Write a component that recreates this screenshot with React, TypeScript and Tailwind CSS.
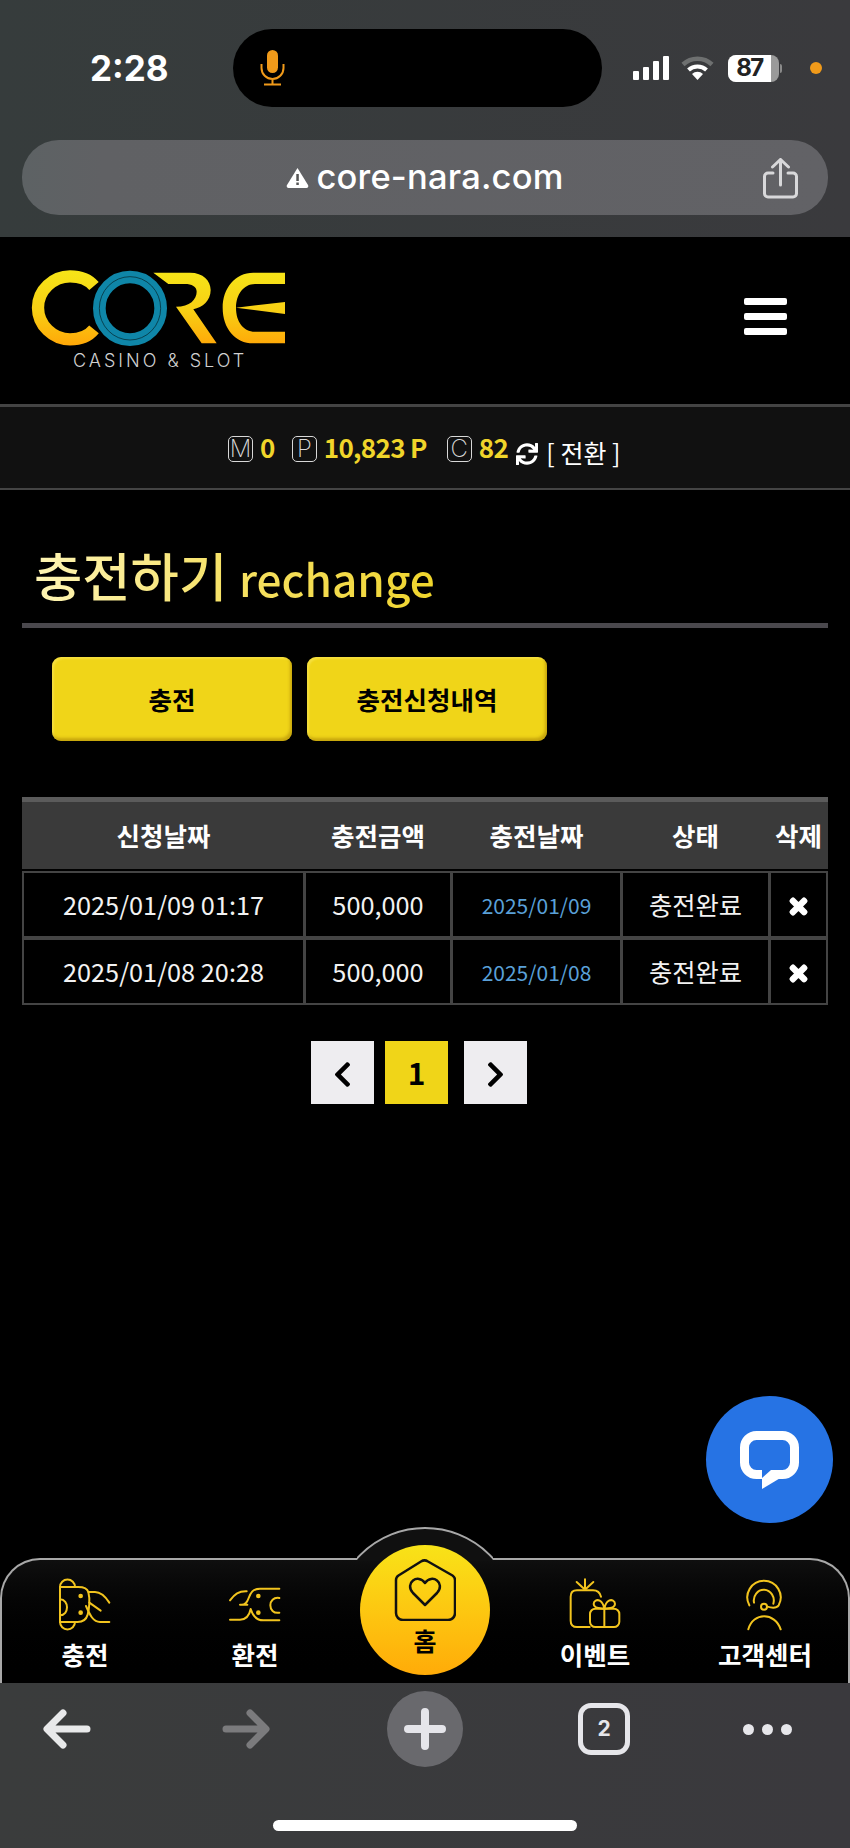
import { FaChevronLeft, FaChevronRight, FaSync, FaTimes } from "react-icons/fa";

const rows = [
  { applied: "2025/01/09 01:17", amount: "500,000", done: "2025/01/09", status: "충전완료" },
  { applied: "2025/01/08 20:28", amount: "500,000", done: "2025/01/08", status: "충전완료" },
];

const tableCols = "grid grid-cols-[279px_144px_167px_145px_55px] gap-x-[3px]";

function Mic() {
  return (
    <svg width="25" height="36" viewBox="0 0 25 36" fill="none" stroke="#f09a1a" strokeWidth="2">
      <rect x="7" y="0" width="11" height="23" rx="5.5" fill="#f09a1a" stroke="none" />
      <path d="M1.5 14v4a11 11 0 0 0 22 0v-4M12.500 29v5M4 34.500h17" />
    </svg>
  );
}

function StatusIcons() {
  return (
    <div className="flex items-center ml-[31px]">
      <div className="flex items-end gap-[4px] h-[24px]">
        <span className="w-[6px] h-[9px] rounded-[1px] bg-white" />
        <span className="w-[6px] h-[13px] rounded-[1px] bg-white" />
        <span className="w-[6px] h-[19px] rounded-[1px] bg-white" />
        <span className="w-[6px] h-[24px] rounded-[1px] bg-white" />
      </div>
      <svg className="ml-[12px]" width="33" height="26" viewBox="0 0 33 26" fill="none" strokeLinecap="butt">
        <path d="M2 9.500a21 21 0 0 1 29 0" stroke="#6e7070" strokeWidth="4.500" />
        <path d="M7.500 15a13 13 0 0 1 18 0" stroke="#ffffff" strokeWidth="4" />
        <path d="M16.500 25 11 19a8 8 0 0 1 11 0z" fill="#ffffff" />
      </svg>
      <div className="ml-[14px] flex items-center">
        <div className="w-[51px] h-[27px] rounded-[8px] flex items-center overflow-hidden bg-[#9a9a9a]">
          <span className="w-[43px] h-full bg-white flex items-center justify-center text-[#222] text-[24px] font-bold font-['Inter',sans-serif] tracking-[-1.5px]">
            87
          </span>
        </div>
        <span className="ml-[1px] w-[2px] h-[9px] rounded-r-sm bg-[#8a8a8a]" />
      </div>
      <span className="ml-[28px] w-[12px] h-[12px] rounded-full bg-[#f09a1a]" />
    </div>
  );
}

function TopChrome() {
  return (
    <div className="h-[237px] shrink-0 bg-linear-to-r from-[#363c3c] to-[#3a3a3d] pt-[29px] font-['Inter',sans-serif]">
      <div className="flex items-center h-[78px] pl-[90px]">
        <span className="w-[78px] text-[35px] leading-none font-bold text-white whitespace-nowrap">2:28</span>
        <div className="ml-[65px] w-[369px] h-[78px] rounded-[39px] bg-black flex items-center pl-[27px]">
          <Mic />
        </div>
        <StatusIcons />
      </div>
      <div className="relative mx-[22px] mt-[33px] h-[75px] rounded-[37px] bg-linear-to-r from-[#5d6264] via-[#606164] via-10% to-[#626266] flex items-center justify-center">
        <svg className="mr-[7px]" width="23" height="21" viewBox="0 0 23 21">
          <path d="M11.500 1 22 18a2 2 0 0 1-1.500 3h-18A2 2 0 0 1 1 18z" fill="#ffffff" />
          <rect x="10.300" y="7" width="2.500" height="7" fill="#555" />
          <rect x="10.300" y="15.500" width="2.500" height="2.500" fill="#555" />
        </svg>
        <span className="text-[34.5px] leading-none font-medium text-white tracking-[0.2px]">core-nara.com</span>
        <svg className="absolute right-[30px] top-[18px]" width="35" height="41" viewBox="0 0 35 41" fill="none" stroke="#d8d8da" strokeWidth="3" strokeLinecap="round">
          <path d="M17.500 27V2M9.500 9l8-7.500 8 7.500" />
          <path d="M10 15H5a3.500 3.500 0 0 0-3.500 3.500v17A3.500 3.500 0 0 0 5 39h25a3.500 3.500 0 0 0 3.500-3.500v-17A3.500 3.500 0 0 0 30 15h-5" />
        </svg>
      </div>
    </div>
  );
}

function CoreLogo() {
  return (
    <svg width="280" height="90" viewBox="0 0 840 270">
      <defs>
        <linearGradient id="coreGold" gradientUnits="userSpaceOnUse" x1="0" y1="30" x2="0" y2="255">
          <stop offset="0" stopColor="#f6e518" />
          <stop offset="0.55" stopColor="#f8cf14" />
          <stop offset="1" stopColor="#ffa808" />
        </linearGradient>
      </defs>
      <path d="M222 78C205 58 180 49 150 49 100 49 54 90 54 143S100 238 150 238c30 0 55-9 72-30" fill="none" stroke="url(#coreGold)" strokeWidth="37" />
      <path d="M400 38H510C550 38 572 62 572 90C572 122 548 142 520 148L590 250H545L468 140C510 140 530 118 530 95C530 80 515 72 495 72H445Z" fill="url(#coreGold)" />
      <path d="M795 38H700C645 38 608 85 608 143C608 205 645 250 700 250H795V215H705C670 215 648 185 648 143C648 105 670 72 705 72H795Z" fill="url(#coreGold)" />
      <path d="M648 143 795 126V162Z" fill="url(#coreGold)" />
      <ellipse cx="330" cy="145" rx="92" ry="94" fill="none" stroke="#0f86a8" strokeWidth="38" />
      <ellipse cx="330" cy="145" rx="92" ry="95" fill="none" stroke="#06343f" strokeWidth="2.500" />
    </svg>
  );
}

function SiteHeader() {
  return (
    <header className="h-[167px] shrink-0 bg-black flex justify-between pl-[20px] pr-[63px] pt-[23px]">
      <div className="flex flex-col">
        <CoreLogo />
        <span className="ml-[53px] mt-[1px] text-[18px] leading-[20px] font-light tracking-[3px] text-[#d0d0d0] font-['Inter',sans-serif] whitespace-nowrap">
          CASINO &amp; SLOT
        </span>
      </div>
      <div className="flex flex-col gap-[8px] pt-[38px]">
        <span className="w-[43px] h-[7px] rounded-[2px] bg-white" />
        <span className="w-[43px] h-[7px] rounded-[2px] bg-white" />
        <span className="w-[43px] h-[7px] rounded-[2px] bg-white" />
      </div>
    </header>
  );
}

function Badge({ letter }: { letter: string }) {
  return (
    <span className="w-[25px] h-[26px] rounded-[5px] border border-[#d8d8d8] flex items-center justify-center text-[#d8d8d8] text-[24px] leading-none font-extralight font-['Inter',sans-serif]">
      {letter}
    </span>
  );
}

function PointBar() {
  return (
    <div className="h-[86px] shrink-0 bg-[#111] border-t-[3px] border-b-[2px] border-[#444] flex items-center pl-[228px] pt-[3px] text-[26px] leading-none">
      <Badge letter="M" />
      <b className="ml-[7px] mb-[4px] font-bold tracking-[-0.5px] text-[#f0d52a]">0</b>
      <span className="ml-[17px]"><Badge letter="P" /></span>
      <b className="ml-[7px] mb-[4px] font-bold tracking-[-0.7px] text-[#f0d52a] whitespace-nowrap">10,823 P</b>
      <span className="ml-[20px]"><Badge letter="C" /></span>
      <b className="ml-[7px] mb-[4px] font-bold tracking-[-0.5px] text-[#f0d52a]">82</b>
      <FaSync className="ml-[8px] mt-[10px] text-white text-[22px]" />
      <span className="ml-[8px] mt-[6px] text-[25px] text-white whitespace-nowrap">[ 전환 ]</span>
    </div>
  );
}

function RechargeTable() {
  return (
    <div className="mx-[22px] mt-[56px]">
      <div className={`${tableCols} px-[2px] h-[72px] border-t-[5px] border-[#5b5b5b] bg-[#3a3a3a] items-center text-center text-[25.5px] font-bold text-white`}>
        <span>신청날짜</span>
        <span>충전금액</span>
        <span>충전날짜</span>
        <span>상태</span>
        <span className="whitespace-nowrap">삭제</span>
      </div>
      <div className="mt-[2px] p-[2px] flex flex-col gap-y-[4px] bg-[#444]">
        {rows.map((row) => (
          <div key={row.applied} className={`${tableCols} h-[63px] text-center text-[25.3px] text-[#f2f2f2]`}>
            <span className="bg-black flex items-center justify-center">{row.applied}</span>
            <span className="bg-black flex items-center justify-center">{row.amount}</span>
            <span className="bg-black flex items-center justify-center pt-[3px] text-[21px] text-[#5aa0d8]">{row.done}</span>
            <span className="bg-black flex items-center justify-center">{row.status}</span>
            <span className="bg-black flex items-center justify-center pt-[3px] text-white">
              <FaTimes className="text-[23px] stroke-[50px]" />
            </span>
          </div>
        ))}
      </div>
    </div>
  );
}

function Pagination() {
  return (
    <div className="mt-[36px] flex pl-[311px] text-black">
      <span className="w-[63px] h-[63px] bg-[#eeedf0] flex items-center justify-center pt-[3px]">
        <FaChevronLeft className="text-[29px]" />
      </span>
      <span className="ml-[11px] w-[63px] h-[63px] bg-[#f0d518] flex items-center justify-center text-[30px] font-bold">1</span>
      <span className="ml-[16px] w-[63px] h-[63px] bg-[#eeedf0] flex items-center justify-center pt-[3px]">
        <FaChevronRight className="text-[29px]" />
      </span>
    </div>
  );
}

function ChargeIcon() {
  return (
    <svg width="70" height="65" viewBox="0 0 210 195" fill="none" stroke="#f2c41e" strokeWidth="6" strokeLinecap="round" strokeLinejoin="round">
      <path d="M30 45a22 22 0 0 1 45 0M30 150a22 22 0 0 0 45 0M30 45v105" />
      <path d="M30 45h55c15 0 27 5 30 15 6 22 2 55-2 68-4 14-16 22-30 22H30" />
      <path d="M30 82c28 0 28 48 0 48" />
      <path d="M115 60h20c20 0 32 15 43 32M118 92l34 24M178 150h-28c-20 0-30-20-42-48" />
      <circle cx="92" cy="72" r="4" fill="#f2c41e" />
      <circle cx="92" cy="122" r="4" fill="#f2c41e" />
    </svg>
  );
}

function ExchangeIcon() {
  return (
    <svg width="70" height="65" viewBox="0 0 210 195" fill="none" stroke="#f2c41e" strokeWidth="6" strokeLinecap="round" strokeLinejoin="round">
      <path d="M178 50h-58c-22 0-28 12-34 28-6 18-16 22-26 20h22" />
      <path d="M30 85c14-18 26-28 50-27" />
      <path d="M30 143h30c18 0 28-12 32-32 6 20 18 34 38 34h48" />
      <path d="M178 78c-36-6-36 50 0 44" />
      <circle cx="115" cy="72" r="4" fill="#f2c41e" />
      <circle cx="115" cy="122" r="4" fill="#f2c41e" />
    </svg>
  );
}

function EventIcon() {
  return (
    <svg className="mr-[10px]" width="70" height="65" viewBox="0 0 210 195" fill="none" stroke="#f2c41e" strokeWidth="6" strokeLinecap="round" strokeLinejoin="round">
      <path d="M90 22v28M65 30l22 20M115 30 93 50" />
      <path d="M138 74c-3-12-10-19-24-19H66c-12 0-19 7-19 19v72c0 12 7 19 19 19h38" />
      <rect x="105" y="110" width="88" height="55" rx="16" />
      <path d="M148 110v55" />
      <path d="M148 110c-8-2-32 2-32-14 0-10 10-14 18-10 8 4 12 14 14 24zM148 110c8-2 32 2 32-14 0-10-10-14-18-10-8 4-12 14-14 24z" />
    </svg>
  );
}

function SupportIcon() {
  return (
    <svg width="70" height="65" viewBox="0 0 210 195" fill="none" stroke="#f2c41e" strokeWidth="6" strokeLinecap="round" strokeLinejoin="round">
      <path d="M58 100A50 50 0 1 1 146 100C138 111 125 108 112 104" />
      <path d="M72 92A30 32 0 1 1 130 95" />
      <circle cx="102" cy="104" r="9" />
      <path d="M55 172c14-52 80-52 97 0" />
    </svg>
  );
}

function NavItem({ label, children }: { label: string; children: React.ReactNode }) {
  return (
    <div className="flex flex-col items-center pt-[12px]">
      {children}
      <span className="text-[25.5px] leading-[34px] font-bold text-white whitespace-nowrap">{label}</span>
    </div>
  );
}

function HomeButton() {
  return (
    <div className="absolute left-[358px] top-[-15px] w-[130px] h-[130px] rounded-full bg-linear-to-b from-[#f8e318] to-[#ffab08] flex flex-col items-center pt-[14px]">
      <svg width="62" height="62" viewBox="0 0 62 62" fill="none" stroke="#111" strokeWidth="2.500" strokeLinejoin="round">
        <path d="M2 21c0-2 1-3.500 2.500-4.500L27 2.500c2-1.300 5-1.300 7 0l24.500 14c1.500 1 2.500 2.500 2.500 4.500v33c0 4-3 7-7 7H9c-4 0-7-3-7-7z" />
        <path d="M31 46 19 34c-9-10 5-20 12-10 7-10 21 0 12 10z" />
      </svg>
      <span className="mt-[4px] text-[25px] leading-[30px] font-bold text-black">홈</span>
    </div>
  );
}

function BottomNav() {
  return (
    <nav className="relative h-[125px] shrink-0 rounded-t-[40px] border-t-2 border-x-2 border-[#a8a8a8] bg-linear-to-b from-[#0f0f0f] to-black">
      <div className="absolute left-[355px] top-[-33px] w-[136px] h-[34px] overflow-hidden">
        <div className="mx-[-24px] w-[184px] h-[184px] rounded-full border-2 border-[#a8a8a8] bg-[#101010]" />
      </div>
      <HomeButton />
      <div className="grid grid-cols-5 h-full mx-[-2px]">
        <NavItem label="충전"><ChargeIcon /></NavItem>
        <NavItem label="환전"><ExchangeIcon /></NavItem>
        <span />
        <NavItem label="이벤트"><EventIcon /></NavItem>
        <NavItem label="고객센터"><SupportIcon /></NavItem>
      </div>
    </nav>
  );
}

function BottomChrome() {
  return (
    <div className="h-[165px] shrink-0 bg-linear-to-r from-[#3a3c3c] to-[#3a393d] pt-[8px] flex flex-col font-['Inter',sans-serif]">
      <div className="flex items-center h-[76px] pl-[43px]">
        <svg width="48" height="40" viewBox="0 0 48 40" fill="none" stroke="#e8e9ea" strokeWidth="7" strokeLinecap="round" strokeLinejoin="round">
          <path d="M44 20H5M20 4 4 20l16 16" />
        </svg>
        <svg className="ml-[131px]" width="48" height="40" viewBox="0 0 48 40" fill="none" stroke="#7b7b7d" strokeWidth="7" strokeLinecap="round" strokeLinejoin="round">
          <path d="M4 20h39M28 4l16 16-16 16" />
        </svg>
        <div className="ml-[117px] w-[76px] h-[76px] rounded-full bg-[#69696d] flex items-center justify-center">
          <svg width="42" height="42" viewBox="0 0 42 42" stroke="#e5e5ea" strokeWidth="8" strokeLinecap="round">
            <path d="M21 4v34M4 21h34" />
          </svg>
        </div>
        <div className="ml-[115px] w-[52px] h-[52px] rounded-[13px] border-[5px] border-[#e6e6ea] flex items-center justify-center text-[21px] font-bold text-[#e6e6ea]">
          2
        </div>
        <div className="ml-[113px] flex gap-[8px]">
          <span className="w-[11px] h-[11px] rounded-full bg-[#e6e6ea]" />
          <span className="w-[11px] h-[11px] rounded-full bg-[#e6e6ea]" />
          <span className="w-[11px] h-[11px] rounded-full bg-[#e6e6ea]" />
        </div>
      </div>
      <div className="mt-[53px] mx-auto w-[304px] h-[11px] rounded-full bg-white" />
    </div>
  );
}

export default function App() {
  return (
    <div className="relative w-[850px] h-[1848px] overflow-hidden bg-black flex flex-col font-['Noto_Sans_CJK_KR','Noto_Sans',sans-serif]">
      <TopChrome />
      <SiteHeader />
      <PointBar />
      <main className="flex-1 min-h-0">
        <div className="mx-[22px] pt-[49px] border-b-[5px] border-[#4a484d] h-[138px]">
          <h2 className="w-fit pl-[12px] text-[52.5px] leading-[70px] font-medium whitespace-nowrap bg-linear-to-r from-[#fff6b8] via-[#f6e164] via-50% to-[#f0d52a] bg-clip-text text-transparent">
            충전하기 <span className="text-[44.2px]">rechange</span>
          </h2>
        </div>
        <div className="flex gap-[15px] pl-[52px] mt-[29px]">
          <button className="w-[240px] h-[84px] rounded-[9px] bg-[#f0d518] shadow-[inset_-2px_-3px_3px_rgba(150,110,0,0.45),inset_2px_2px_2px_rgba(255,240,120,0.4)] text-[25.5px] font-bold text-black">충전</button>
          <button className="w-[240px] h-[84px] rounded-[9px] bg-[#f0d518] shadow-[inset_-2px_-3px_3px_rgba(150,110,0,0.45),inset_2px_2px_2px_rgba(255,240,120,0.4)] text-[25.5px] font-bold text-black">충전신청내역</button>
        </div>
        <RechargeTable />
        <Pagination />
      </main>
      <BottomNav />
      <BottomChrome />
      <button className="absolute left-[706px] top-[1396px] w-[127px] h-[127px] rounded-full bg-[#2673e4] flex items-center justify-center">
        <svg width="59" height="58" viewBox="0 0 59 58" fill="none">
          <rect x="4.500" y="4.500" width="50" height="39" rx="12" stroke="#ffffff" strokeWidth="9" />
          <path d="M22 42v16l20-12z" fill="#ffffff" />
          <path d="M22 39v8l9-8z" fill="#2673e4" />
        </svg>
      </button>
    </div>
  );
}
